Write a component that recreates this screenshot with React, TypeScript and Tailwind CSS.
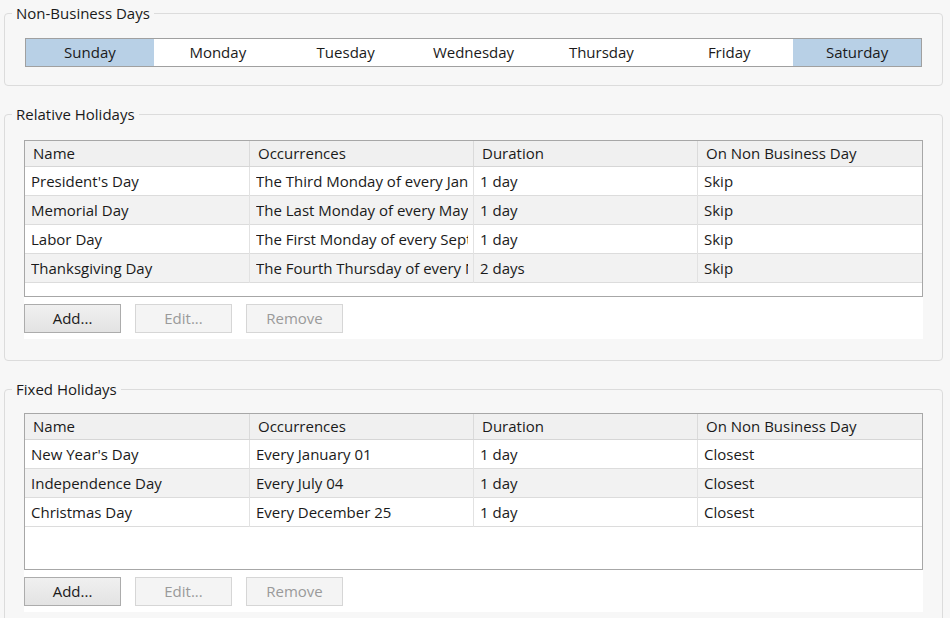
import React from 'react';

type Row = { name: string; occ: string; dur: string; onNon: string };

const days = ['Sunday', 'Monday', 'Tuesday', 'Wednesday', 'Thursday', 'Friday', 'Saturday'];
const offDays = ['Sunday', 'Saturday'];

const relative: Row[] = [
  { name: "President's Day", occ: 'The Third Monday of every January', dur: '1 day', onNon: 'Skip' },
  { name: 'Memorial Day', occ: 'The Last Monday of every May', dur: '1 day', onNon: 'Skip' },
  { name: 'Labor Day', occ: 'The First Monday of every September', dur: '1 day', onNon: 'Skip' },
  { name: 'Thanksgiving Day', occ: 'The Fourth Thursday of every November', dur: '2 days', onNon: 'Skip' },
];

const fixed: Row[] = [
  { name: "New Year's Day", occ: 'Every January 01', dur: '1 day', onNon: 'Closest' },
  { name: 'Independence Day', occ: 'Every July 04', dur: '1 day', onNon: 'Closest' },
  { name: 'Christmas Day', occ: 'Every December 25', dur: '1 day', onNon: 'Closest' },
];

const cols = 'grid grid-cols-[225px_224px_224px_1fr]';

const Group: React.FC<{ title: string; children: React.ReactNode; className?: string }> = ({ title, children, className }) => (
  <fieldset className={`border border-[#dcdcdc] rounded-[4px] ml-[4px] mr-[7px] px-0 ${className || ''}`}>
    <legend className="ml-[7px] px-[4px] text-[15px] leading-[20px] text-[#1a1a1a]">{title}</legend>
    {children}
  </fieldset>
);

const HolidayTable: React.FC<{ rows: Row[] }> = ({ rows }) => (
  <div className="mx-[19px] bg-white">
    <div className="h-[157px] border border-[#a7a7a7] bg-white overflow-hidden">
      <div className={`${cols} h-[26px] bg-[#f0f0f0] border-b border-[#d6d6d6] text-[#1a1a1a]`}>
        {['Name', 'Occurrences', 'Duration', 'On Non Business Day'].map((h, i) => (
          <div key={h} className={`pl-[8px] leading-[25px] ${i < 3 ? 'border-r border-[#dadada]' : ''}`}>{h}</div>
        ))}
      </div>
      {rows.map((r, i) => (
        <div key={r.name} className={`${cols} h-[29px] border-b border-[#dcdcdc] ${i % 2 ? 'bg-[#f2f2f2]' : 'bg-white'}`}>
          {[r.name, r.occ, r.dur, r.onNon].map((c, j) => (
            <div key={j} className={`pl-[6px] pr-[5px] leading-[29px] ${j < 3 ? 'border-r border-[#e2e2e2]' : ''}`}>
              <div className="whitespace-nowrap overflow-hidden">{c}</div>
            </div>
          ))}
        </div>
      ))}
    </div>
    <div className="flex gap-[14px] pt-[7px] pb-[6px]">
      <button className="w-[97px] h-[29px] border border-[#acacac] bg-gradient-to-b from-[#f0f0f0] to-[#e3e3e3] text-[#1a1a1a]">Add...</button>
      <button className="w-[97px] h-[29px] border border-[#d6d6d6] bg-[#f4f4f4] text-[#9a9a9a]">Edit...</button>
      <button className="w-[97px] h-[29px] border border-[#d6d6d6] bg-[#f4f4f4] text-[#9a9a9a]">Remove</button>
    </div>
  </div>
);

const App: React.FC = () => {
  return (
    <div
      className="w-[950px] h-[618px] overflow-hidden bg-[#f7f7f7] pt-[3px] text-[15px] text-[#1a1a1a]"
      style={{ fontFamily: '"Open Sans", "Noto Sans", sans-serif' }}
    >
      <Group title="Non-Business Days" className="pb-[18px]">
        <div className="mx-[20px] mt-[15px] flex border border-[#a0a0a0] h-[29px]">
          {days.map(d => (
            <div
              key={d}
              className={`flex-1 flex items-center justify-center ${offDays.includes(d) ? 'bg-[#b8d0e6]' : 'bg-white'}`}
            >
              {d}
            </div>
          ))}
        </div>
      </Group>

      <Group title="Relative Holidays" className="mt-[18px] pb-[21px]">
        <div className="mt-[16px]">
          <HolidayTable rows={relative} />
        </div>
      </Group>

      <Group title="Fixed Holidays" className="mt-[18px] pb-[20px]">
        <div className="mt-[14px]">
          <HolidayTable rows={fixed} />
        </div>
      </Group>
    </div>
  );
};

export default App;
